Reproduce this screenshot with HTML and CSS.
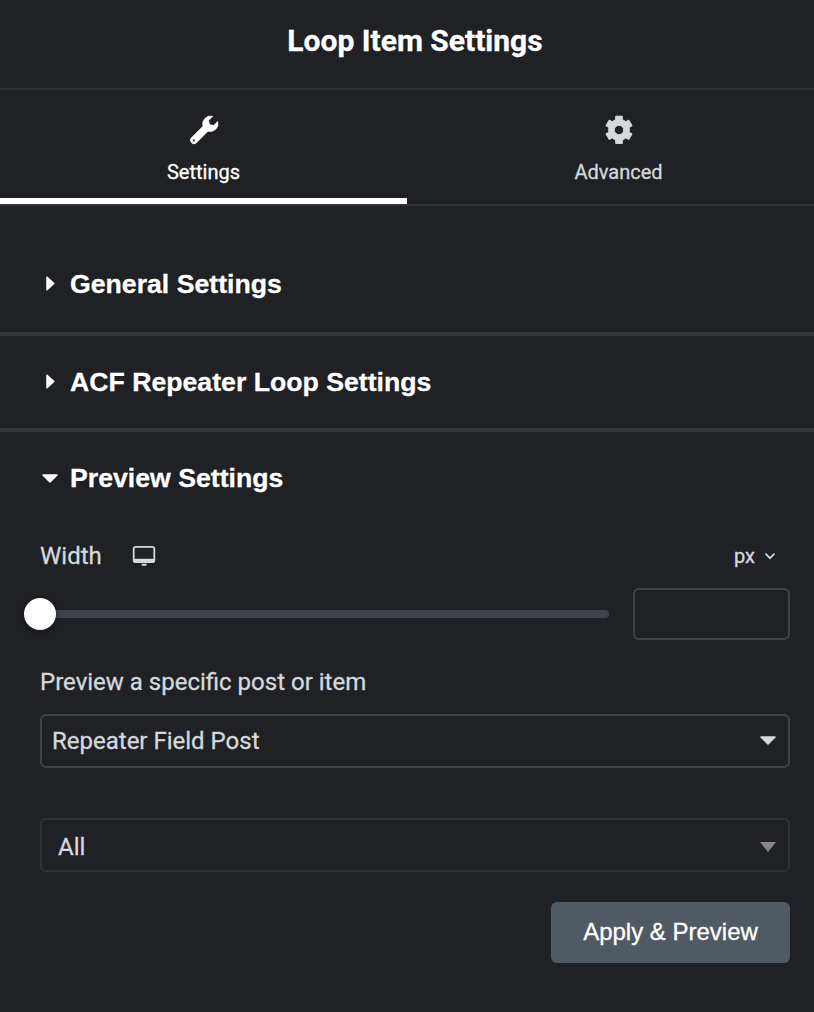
FILE: index.html
```html
<!DOCTYPE html>
<html lang="en">
<head>
<meta charset="utf-8">
<title>Loop Item Settings</title>
<link rel="stylesheet" href="styles.css">
</head>
<body>
<main class="panel">
  <header class="panel-header"><h1 class="panel-title">Loop Item Settings</h1></header>
  <nav class="tabs">
    <a class="tab tab-active">
      <svg class="tab-icon" viewBox="0 0 28 28"><path fill="currentColor" stroke="currentColor" stroke-width=".7" stroke-linejoin="round" fill-rule="evenodd" d="M22.7.4a7.9 7.9 0 0 0-9.7 9.8L1.3 21.9a3.55 3.55 0 0 0 5 5L18 15.2a7.9 7.9 0 0 0 9.7-9.8L23.6 9.5l-4.1-.9-.9-4.1ZM3.8 23.1a1.3 1.3 0 1 1 0 2.6 1.3 1.3 0 0 1 0-2.6Z"/></svg>
      <span>Settings</span>
    </a>
    <a class="tab">
      <svg class="tab-icon" viewBox="0 0 28 28"><path fill="currentColor" stroke="currentColor" stroke-width="1" stroke-linejoin="round" fill-rule="evenodd" d="M10.7.2h6.6v3.5a10.8 10.8 0 0 1 3.5 2l3-1.7 3.3 5.7-3 1.8a10.8 10.8 0 0 1 0 4.6l3 1.8-3.3 5.7-3-1.7a10.8 10.8 0 0 1-3.5 2v3.5h-6.6v-3.5a10.8 10.8 0 0 1-3.5-2l-3 1.7L.9 17.9l3-1.8a10.8 10.8 0 0 1 0-4.6l-3-1.8 3.3-5.7 3 1.7a10.8 10.8 0 0 1 3.5-2ZM14 9.3a4.7 4.7 0 1 0 0 9.4 4.7 4.7 0 0 0 0-9.4Z"/></svg>
      <span>Advanced</span>
    </a>
  </nav>
  <section class="section section-general">
    <svg class="caret-right" viewBox="0 0 9 15"><path d="M1 1.2 7.8 7.5 1 13.8Z"/></svg>
    <h2 class="section-title">General Settings</h2>
  </section>
  <section class="section section-repeater">
    <svg class="caret-right" viewBox="0 0 9 15"><path d="M1 1.2 7.8 7.5 1 13.8Z"/></svg>
    <h2 class="section-title">ACF Repeater Loop Settings</h2>
  </section>
  <section class="section section-preview">
    <svg class="caret-down" viewBox="0 0 16 9"><path d="M1 1h14L8 8Z"/></svg>
    <h2 class="section-title">Preview Settings</h2>
  </section>
  <div class="controls">
    <div class="width-row">
      <label class="label">Width</label>
      <svg class="monitor" viewBox="0 0 24 22"><path fill="none" stroke="currentColor" stroke-width="1.8" d="M3.5 1.9h17a1.8 1.8 0 0 1 1.8 1.8v11.6a1.8 1.8 0 0 1-1.8 1.8h-17a1.8 1.8 0 0 1-1.8-1.8V3.7a1.8 1.8 0 0 1 1.8-1.8Z"/><path fill="currentColor" d="M1.5 13.8h21v2a2 2 0 0 1-2 2h-17a2 2 0 0 1-2-2ZM9.6 18.8h5v1.1a.8.8 0 0 1-.8.8h-3.4a.8.8 0 0 1-.8-.8Z"/></svg>
      <span class="unit">px</span>
      <svg class="chevron" viewBox="0 0 10 7"><path d="m1 1.2 4 4 4-4"/></svg>
    </div>
    <div class="slider-row">
      <div class="track"><div class="thumb"></div></div>
      <input class="number" aria-label="Width">
    </div>
    <label class="label preview-label">Preview a specific post or item</label>
    <div class="select select-source"><span class="source-text">Repeater Field Post</span><svg class="caret-down" viewBox="0 0 16 9"><path d="M1 1h14L8 8Z"/></svg></div>
    <div class="select select-item"><span class="item-text">All</span><svg class="item-arrow" viewBox="0 0 16 10"><path d="M0 0h16L8 10Z"/></svg></div>
    <button class="apply">Apply &amp; Preview</button>
  </div>
</main>
</body>
</html>
```
FILE: styles.css
```css
* { box-sizing: border-box; }
body { margin: 0; background: #1f2124; }
.panel { height: 1012px; overflow: hidden; color: #d5d8dc; font-family: Roboto, sans-serif; -webkit-text-stroke: 0.3px currentColor; }
.panel-header { height: 90px; border-bottom: 2px solid #303236; text-align: center; padding: 21px 0 0 16px; }
.panel-title { margin: 0; color: #fff; font-size: 30px; line-height: 40px; font-weight: 700; }
.tabs { display: flex; height: 116px; border-bottom: 2px solid #303236; }
.tab { width: 407px; padding-top: 25.5px; display: flex; flex-direction: column; align-items: center; gap: 16.5px; font-size: 20px; line-height: 24px; border-bottom: 6px solid transparent; }
.tab + .tab { padding-left: 16px; }
.tab-active { color: #fff; border-color: #fff; }
.tab-icon { width: 28px; height: 28px; flex: none; overflow: visible; }
.section { display: flex; align-items: center; padding-left: 42px; color: #fff; }
.section-general { height: 130px; padding-top: 29px; border-bottom: 4px solid #33353a; }
.section-repeater { height: 96px; padding-bottom: 1px; border-bottom: 4px solid #33353a; }
.section-preview { height: 92px; }
.section-title { margin: 0; font: 700 26.67px/32px "Liberation Sans", Arial, sans-serif; }
.caret-right { width: 9px; height: 15px; margin: 0 15px 0 4px; }
.caret-down { width: 16px; height: 9px; }
.section-preview .caret-down { margin-right: 12px; }
.caret-right path, .caret-down path { fill: currentColor; stroke: currentColor; stroke-width: 1.5; stroke-linejoin: round; }
.controls { padding: 16px 24px 0 40px; display: flex; flex-direction: column; }
.width-row { height: 32px; display: flex; align-items: center; }
.label { font-size: 24px; line-height: 32px; }
.monitor { width: 24px; height: 22px; margin: 0 0 1px 30px; }
.unit { margin-left: auto; font-size: 20px; line-height: 24px; }
.chevron { width: 10px; height: 7px; margin: 0 15px 0 10px; fill: none; stroke: currentColor; stroke-width: 1.7; stroke-linecap: round; }
.slider-row { display: flex; align-items: center; gap: 24px; margin-top: 16px; height: 52px; }
.track { flex: 1; height: 8px; border-radius: 4px; background: #3f444b; display: flex; align-items: center; }
.thumb { width: 32px; height: 32px; flex: none; border-radius: 50%; margin-left: -15.6px; background: #fff; box-shadow: 0 2px 8px #0006; }
.number { width: 157px; height: 52px; border: 2px solid #404247; border-radius: 6px; background: transparent; }
.preview-label { margin-top: 26px; }
.select { height: 54px; border: 2px solid #404247; border-radius: 6px; display: flex; align-items: center; justify-content: space-between; font-size: 24px; line-height: 32px; }
.select-source { margin-top: 16px; padding: 0 12px 0 10px; }
.select-source .caret-down { margin-bottom: 1px; }
.select-item { margin-top: 50px; padding: 4px 12px 0 16px; border-color: #303236; }
.item-arrow { width: 16px; height: 10px; margin-bottom: 1px; fill: #888; }
.apply { align-self: flex-end; width: 239px; height: 61px; margin-top: 30px; padding: 0 0 2px; border: 0; border-radius: 6px; background: #515962; color: #fff; font: 24px/32px "Liberation Sans", Arial, sans-serif; -webkit-text-stroke: 0.3px currentColor; }
```
